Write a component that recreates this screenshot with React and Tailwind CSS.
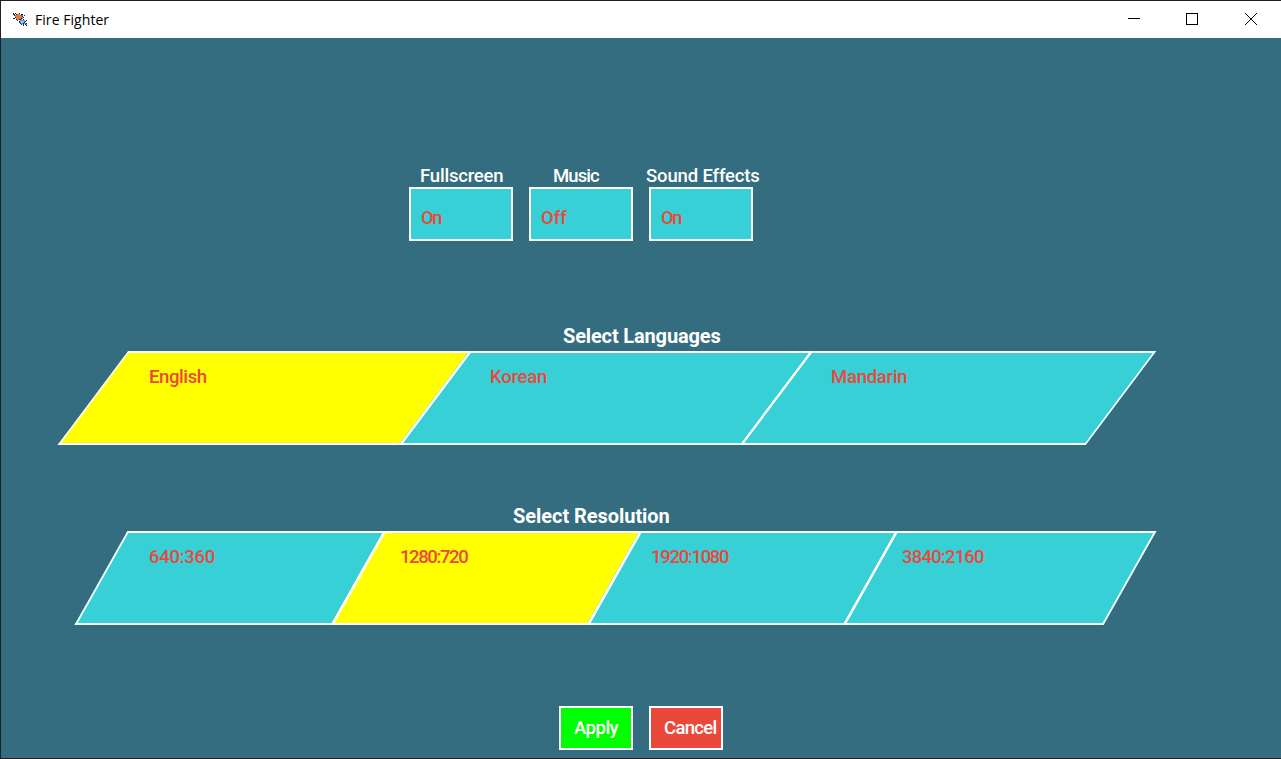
import React from "react";

const pixels = [
  "k.k...k........",
  "kk.kooo.kk.....",
  ".kooooookb.k...",
  "..oooooook.....",
  "..koooooobk....",
  "kk.oooookb.....",
  "...kookkb.k....",
  "....k..bbbbb.k.",
  "......kblllbk..",
  "......kbllbk...",
  ".......kbbkbbk.",
  "........k.k.kb.",
  "..........k..k.",
];
const ink = { k: "#1c2550", o: "#e07b3c", b: "#5c8fce", l: "#a5d0f0" };

function AppIcon() {
  return (
    <svg width="15" height="13" viewBox="0 0 15 13" shapeRendering="crispEdges">
      {pixels.flatMap((row, y) =>
        [...row].map((c, x) =>
          c === "." ? null : <rect key={x + "-" + y} x={x} y={y} width="1" height="1" fill={ink[c]} />
        )
      )}
    </svg>
  );
}

function Toggle({ label, value, labelClass, valueClass }) {
  return (
    <div className="w-[104px]">
      <div className={`h-[22px] whitespace-nowrap text-white leading-[22px] ${labelClass}`}>{label}</div>
      <button className={`flex h-[54px] w-full items-center border-2 border-white bg-[#37d0d7] pt-[9px] pl-[10px] text-[#eb483c] ${valueClass}`}>
        {value}
      </button>
    </div>
  );
}

const languages = [
  { label: "English", cls: "pl-[56px] before:bg-[#ffff00] before:border-l-2 tracking-[-0.4px]" },
  { label: "Korean", cls: "pl-[56px] before:bg-[#37d0d7] before:border-l-3 tracking-[-0.25px]" },
  { label: "Mandarin", cls: "pl-[56px] before:bg-[#37d0d7] before:border-l-3 before:border-r-2 tracking-[-0.25px]" },
];
const resolutions = [
  { label: "640:360", cls: "pl-[48px] before:bg-[#37d0d7] before:border-l-2 tracking-[-0.3px]" },
  { label: "1280:720", cls: "pl-[43px] before:bg-[#ffff00] before:border-l-3 tracking-[-1.4px]" },
  { label: "1920:1080", cls: "pl-[38px] before:bg-[#37d0d7] before:border-l-3 tracking-[-1.3px]" },
  { label: "3840:2160", cls: "pl-[33px] before:bg-[#37d0d7] before:border-l-3 before:border-r-2 tracking-[-0.8px]" },
];

function Choice({ label, cls, skew }) {
  return (
    <button
      className={`relative isolate flex h-[94px] items-start pt-[14px] text-left leading-6 text-[#eb483c] before:absolute before:inset-0 before:-z-10 before:border-y-2 before:border-white before:content-[''] ${skew} ${cls}`}
    >
      {label}
    </button>
  );
}

export default function App() {
  return (
    <div className="flex h-[759px] w-[1281px] flex-col overflow-hidden border-t border-b border-l border-[#1f2023] bg-[#346c80] font-['Roboto',sans-serif] text-[18.5px] font-medium">
      <header className="flex h-[37px] shrink-0 items-center bg-white pl-3 text-black">
        <AppIcon />
        <span className="ml-[7px] flex-1 font-['Open_Sans','Noto_Sans',sans-serif] text-[14px] font-normal tracking-[0.05px]">Fire Fighter</span>
        <svg width="160" height="37" viewBox="1121 1 160 37" fill="none" stroke="#000" shapeRendering="crispEdges">
          <path d="M1128 18.5h12M1186.5 13.5h11v11h-11z" />
          <path d="M1245 13l12 12M1257 13l-12 12" shapeRendering="auto" />
        </svg>
      </header>

      <main className="flex flex-1 flex-col">
        <section className="mt-[127px] ml-[408px] flex gap-4">
          <Toggle label="Fullscreen" value="On" labelClass="pl-[11px] tracking-[-0.2px]" valueClass="tracking-[-1.5px]" />
          <Toggle label="Music" value="Off" labelClass="pl-[24px] tracking-[-0.9px]" valueClass="" />
          <Toggle label="Sound Effects" value="On" labelClass="-ml-[3px] tracking-[-0.15px]" valueClass="tracking-[-1.5px]" />
        </section>

        <section className="mt-[83px]">
          <h2 className="h-[27px] pl-[562px] text-[20px] leading-[24px] font-bold tracking-[-0.15px] text-white">Select Languages</h2>
          <div className="ml-[92px] grid w-[1028px] grid-cols-[341px_341px_346px]">
            {languages.map((o) => (
              <Choice key={o.label} {...o} skew="before:-skew-x-[36.9deg]" />
            ))}
          </div>
        </section>

        <section className="mt-[59px]">
          <h2 className="h-[27px] pl-[512px] text-[20px] leading-[24px] font-bold tracking-[-0.05px] text-white">Select Resolution</h2>
          <div className="ml-[100px] grid w-[1029px] grid-cols-[256px_256px_256px_261px]">
            {resolutions.map((o) => (
              <Choice key={o.label} {...o} skew="before:-skew-x-[29.4deg]" />
            ))}
          </div>
        </section>

        <section className="mt-[81px] ml-[558px] flex gap-4 text-white">
          <button className="h-[44px] w-[74px] border-2 border-white bg-[#00ff00] pt-[2px] pl-[13px] text-left tracking-[-0.5px]">Apply</button>
          <button className="h-[44px] w-[74px] border-2 border-white bg-[#eb483c] pt-[2px] pl-[13px] text-left tracking-[-0.7px]">Cancel</button>
        </section>
      </main>
    </div>
  );
}
